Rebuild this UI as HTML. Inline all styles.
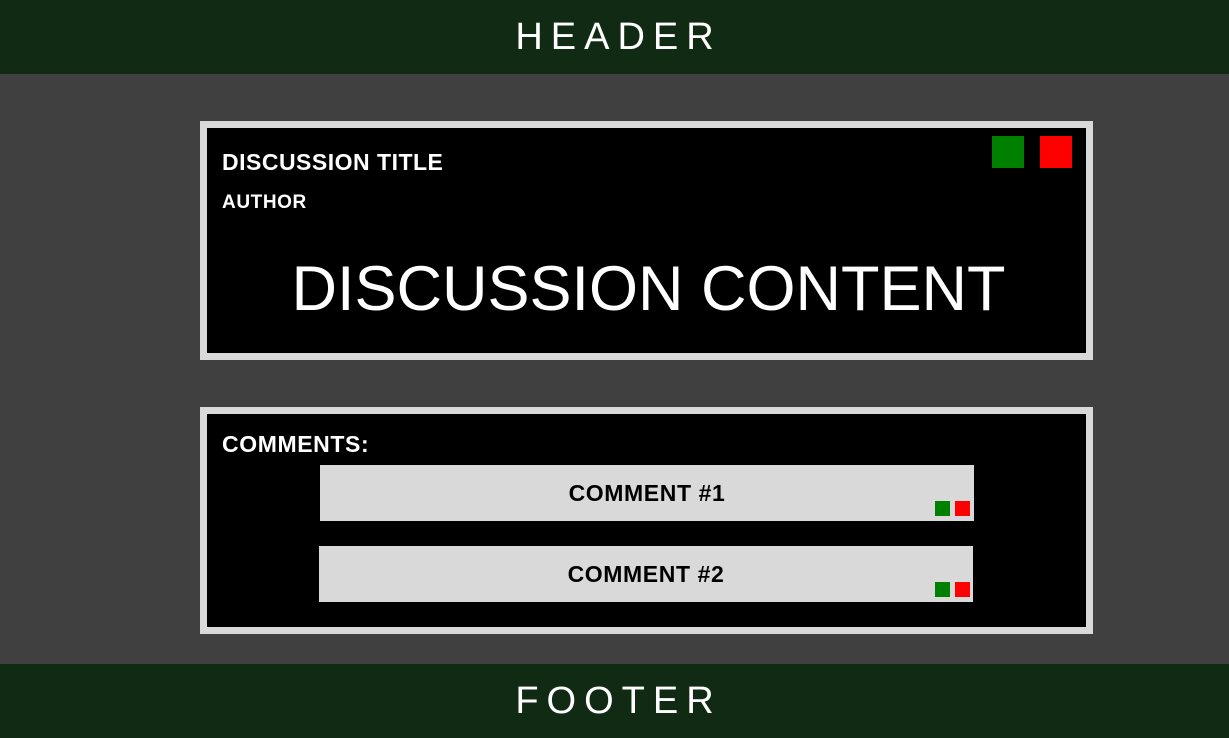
<!DOCTYPE html>
<html><head><style>
*{margin:0;padding:0;box-sizing:border-box}
body{width:1229px;height:738px;background:#404040;font-family:"Liberation Sans",sans-serif;position:relative;overflow:hidden}
.bar{position:absolute;left:0;width:1229px;height:74px;background:#112a13;color:#fff;font-size:38px;letter-spacing:8px;text-align:center;line-height:74px;padding-left:8px}
.box{position:absolute;left:200px;width:893px;background:#000;border:7px solid #d9d9d9}
.sq{position:absolute}
.g{background:#008000}.r{background:#ff0000}
.t{position:absolute;color:#fff;font-weight:bold}
.c{position:absolute;width:654px;height:56px;background:#d9d9d9;text-align:center;font-weight:bold;font-size:23px;letter-spacing:0.6px;line-height:56px;color:#000}
</style></head><body>
<div class="bar" style="top:0">HEADER</div>
<div class="box" style="top:121px;height:239px">
  <div class="t" style="left:15px;top:21px;font-size:23px;letter-spacing:0.5px">DISCUSSION TITLE</div>
  <div class="t" style="left:15px;top:64px;font-size:19px;letter-spacing:0.6px">AUTHOR</div>
  <div style="position:absolute;left:0;right:0;top:124px;text-align:center;color:#fff;font-size:63px;line-height:74px;padding-left:4px">DISCUSSION CONTENT</div>
  <div class="sq g" style="left:785px;top:8px;width:32px;height:32px"></div>
  <div class="sq r" style="left:833px;top:8px;width:32px;height:32px"></div>
</div>
<div class="box" style="top:407px;height:227px">
  <div class="t" style="left:15px;top:17px;font-size:23px;letter-spacing:0.6px">COMMENTS:</div>
</div>
<div class="c" style="left:320px;top:465px">COMMENT #1
  <div class="sq g" style="left:615px;top:36px;width:15px;height:15px"></div>
  <div class="sq r" style="left:635px;top:36px;width:15px;height:15px"></div>
</div>
<div class="c" style="left:319px;top:546px">COMMENT #2
  <div class="sq g" style="left:616px;top:36px;width:15px;height:15px"></div>
  <div class="sq r" style="left:636px;top:36px;width:15px;height:15px"></div>
</div>
<div class="bar" style="top:664px">FOOTER</div>
</body></html>
